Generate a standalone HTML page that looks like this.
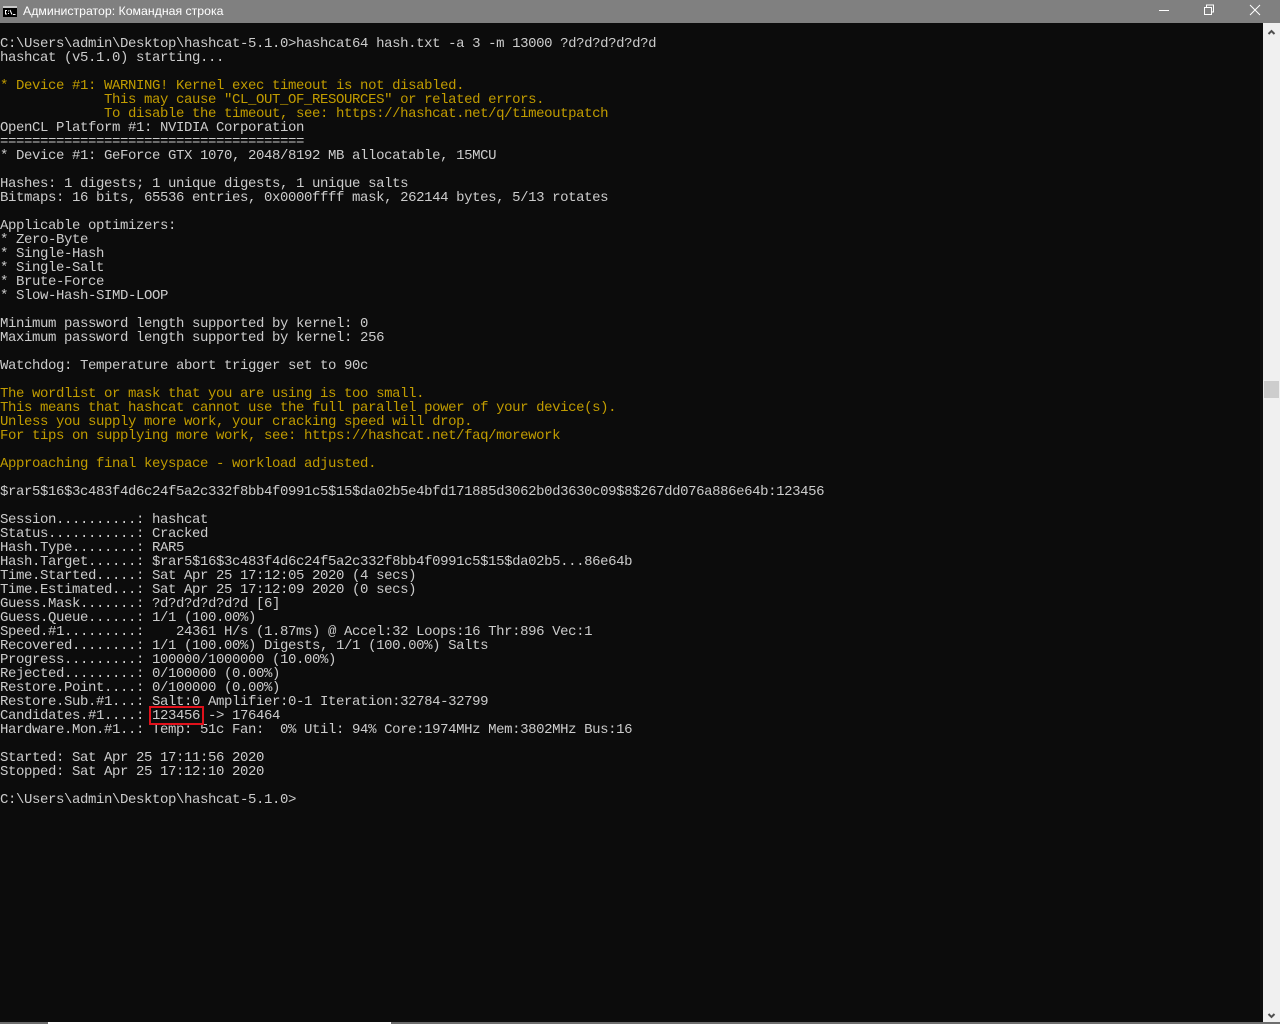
<!DOCTYPE html>
<html><head><meta charset="utf-8"><style>
html,body{margin:0;padding:0;width:1280px;height:1024px;overflow:hidden;background:#0c0c0c}
#title{position:absolute;left:0;top:0;width:1280px;height:23px;background:#808080;color:#fff;font:12.3px/23px "Liberation Sans",sans-serif}
#title span{position:absolute;left:23px;top:0;white-space:nowrap}
#title svg{position:absolute;left:0;top:0}
pre{position:absolute;left:0;top:37px;margin:0;font:14px/14px "Liberation Mono",monospace;letter-spacing:-.4px;color:#ccc;white-space:pre}
pre b{font-weight:normal;color:#c19c00}
#sb{position:absolute;left:1263px;top:23px;width:17px;height:999px;background:#f0f0f0}
#thumb{position:absolute;left:1264px;top:381px;width:15px;height:17px;background:#cdcdcd}
#red{position:absolute;left:149px;top:706px;width:51px;height:15px;border:2px solid #e0111b}
#bot{position:absolute;left:0;top:1022px;width:1280px;height:2px;background:#6e6e6e}
#bot i{position:absolute;left:48px;top:0;width:343px;height:2px;background:#fff}
</style></head><body>
<div id="title">
<svg width="1280" height="23" fill="none">
<rect x="3" y="6" width="14" height="11" fill="#c8c8c8"/><rect x="3" y="8" width="14" height="9" fill="#000"/>
<path d="M7 10.500h-1.500v3.500h1.500M8.500 10.500v1M8.500 13v1M10 10l2 4.500M13 14.500h2.500" stroke="#fff"/>
<path d="M1159 10.500h10" stroke="#fff"/>
<path d="M1204.500 7.500h7v7h-7zM1206.500 7.500v-2.500h7v7h-2" stroke="#fff"/>
<path d="M1250 5l10 10M1260 5l-10 10" stroke="#fff"/>
</svg>
<span>Администратор: Командная строка</span></div>
<pre>C:\Users\admin\Desktop\hashcat-5.1.0&gt;hashcat64 hash.txt -a 3 -m 13000 ?d?d?d?d?d?d
hashcat (v5.1.0) starting...

<b>* Device #1: WARNING! Kernel exec timeout is not disabled.
             This may cause "CL_OUT_OF_RESOURCES" or related errors.
             To disable the timeout, see: https://hashcat.net/q/timeoutpatch</b>
OpenCL Platform #1: NVIDIA Corporation
======================================
* Device #1: GeForce GTX 1070, 2048/8192 MB allocatable, 15MCU

Hashes: 1 digests; 1 unique digests, 1 unique salts
Bitmaps: 16 bits, 65536 entries, 0x0000ffff mask, 262144 bytes, 5/13 rotates

Applicable optimizers:
* Zero-Byte
* Single-Hash
* Single-Salt
* Brute-Force
* Slow-Hash-SIMD-LOOP

Minimum password length supported by kernel: 0
Maximum password length supported by kernel: 256

Watchdog: Temperature abort trigger set to 90c

<b>The wordlist or mask that you are using is too small.
This means that hashcat cannot use the full parallel power of your device(s).
Unless you supply more work, your cracking speed will drop.
For tips on supplying more work, see: https://hashcat.net/faq/morework

Approaching final keyspace - workload adjusted.</b>

$rar5$16$3c483f4d6c24f5a2c332f8bb4f0991c5$15$da02b5e4bfd171885d3062b0d3630c09$8$267dd076a886e64b:123456

Session..........: hashcat
Status...........: Cracked
Hash.Type........: RAR5
Hash.Target......: $rar5$16$3c483f4d6c24f5a2c332f8bb4f0991c5$15$da02b5...86e64b
Time.Started.....: Sat Apr 25 17:12:05 2020 (4 secs)
Time.Estimated...: Sat Apr 25 17:12:09 2020 (0 secs)
Guess.Mask.......: ?d?d?d?d?d?d [6]
Guess.Queue......: 1/1 (100.00%)
Speed.#1.........:    24361 H/s (1.87ms) @ Accel:32 Loops:16 Thr:896 Vec:1
Recovered........: 1/1 (100.00%) Digests, 1/1 (100.00%) Salts
Progress.........: 100000/1000000 (10.00%)
Rejected.........: 0/100000 (0.00%)
Restore.Point....: 0/100000 (0.00%)
Restore.Sub.#1...: Salt:0 Amplifier:0-1 Iteration:32784-32799
Candidates.#1....: 123456 -&gt; 176464
Hardware.Mon.#1..: Temp: 51c Fan:  0% Util: 94% Core:1974MHz Mem:3802MHz Bus:16

Started: Sat Apr 25 17:11:56 2020
Stopped: Sat Apr 25 17:12:10 2020

C:\Users\admin\Desktop\hashcat-5.1.0&gt;</pre>
<div id="sb"></div><div id="thumb"></div>
<svg style="position:absolute;left:1263px;top:23px" width="17" height="999" fill="none" stroke="#505050" stroke-width="2"><path d="M5.500 11l3-3 3 3"/><path d="M5.500 991l3 3 3-3"/></svg>
<div id="red"></div>
<div id="bot"><i></i></div>
</body></html>
